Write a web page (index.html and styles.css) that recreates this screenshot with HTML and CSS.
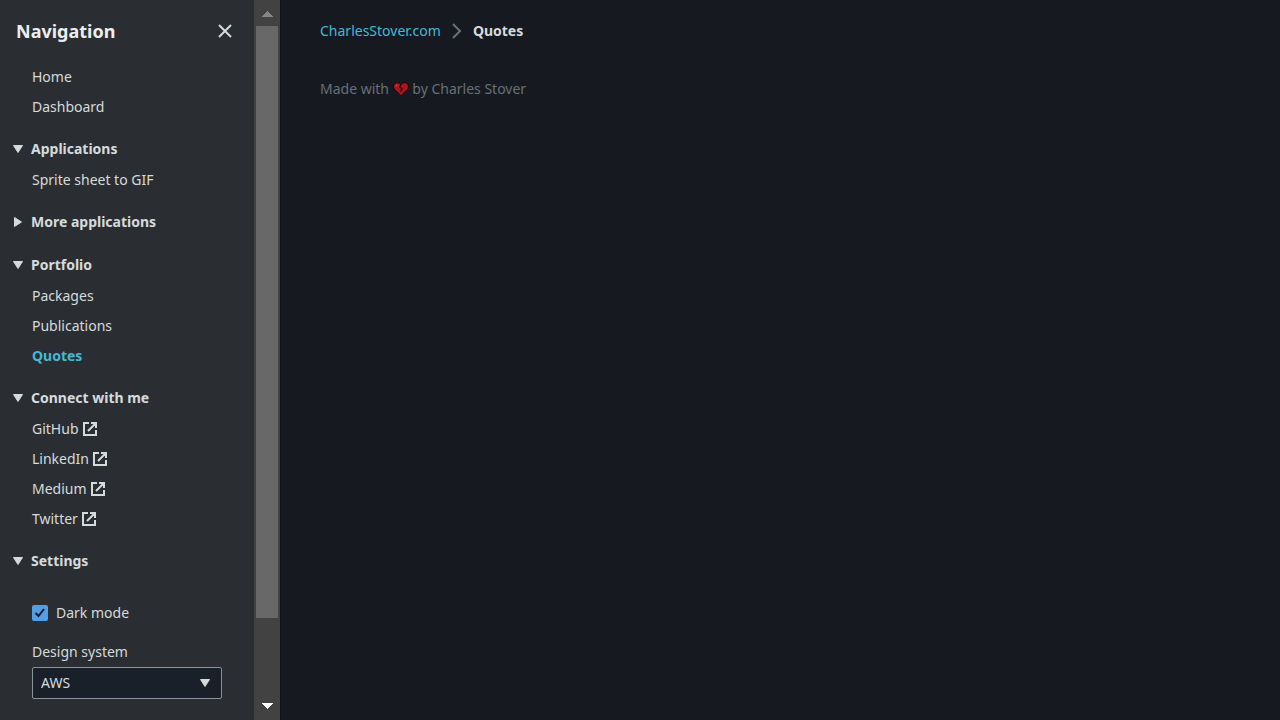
FILE: index.html
```html
<!DOCTYPE html>
<html lang="en">
<head>
<meta charset="utf-8">
<meta name="viewport" content="width=device-width, initial-scale=1">
<title>Quotes - CharlesStover.com</title>
<link rel="stylesheet" href="styles.css">
</head>
<body>
<svg class="defs" aria-hidden="true">
  <symbol id="external" viewBox="0 0 16 16"><path d="M7 2H2v12h12V9M9 2h5v5M6 10l7.500-7.500" fill="none" stroke="currentColor" stroke-width="2"/></symbol>
  <symbol id="caret" viewBox="0 0 12 10"><path d="M1.500 1.500h9L6 8.500z" fill="currentColor" stroke="currentColor" stroke-linejoin="round"/></symbol>
</svg>
<div class="app">
  <aside class="drawer">
    <nav class="navigation" aria-label="Navigation">
      <header class="nav-header">
        <h2 class="nav-title">Navigation</h2>
        <button class="close" type="button" aria-label="Close navigation">
          <svg class="icon" viewBox="0 0 16 16"><path d="M2 2l12 12M14 2L2 14" fill="none" stroke="currentColor" stroke-width="2"/></svg>
        </button>
      </header>
      <ul class="links">
        <li><a class="link" href="#home">Home</a></li>
        <li><a class="link" href="#dashboard">Dashboard</a></li>
      </ul>
      <section class="group">
        <button class="group-title" type="button" aria-expanded="true"><svg class="caret"><use href="#caret"/></svg>Applications</button>
        <ul class="links">
          <li><a class="link" href="#sprite">Sprite sheet to GIF</a></li>
        </ul>
      </section>
      <section class="group">
        <button class="group-title" type="button" aria-expanded="false"><svg class="caret caret-closed"><use href="#caret"/></svg>More applications</button>
      </section>
      <section class="group">
        <button class="group-title" type="button" aria-expanded="true"><svg class="caret"><use href="#caret"/></svg>Portfolio</button>
        <ul class="links">
          <li><a class="link" href="#packages">Packages</a></li>
          <li><a class="link" href="#publications">Publications</a></li>
          <li><a class="link link-active" href="#quotes" aria-current="page">Quotes</a></li>
        </ul>
      </section>
      <section class="group">
        <button class="group-title" type="button" aria-expanded="true"><svg class="caret"><use href="#caret"/></svg>Connect with me</button>
        <ul class="links">
          <li><a class="link" href="#github">GitHub<svg class="icon"><use href="#external"/></svg></a></li>
          <li><a class="link" href="#linkedin">LinkedIn<svg class="icon"><use href="#external"/></svg></a></li>
          <li><a class="link" href="#medium">Medium<svg class="icon"><use href="#external"/></svg></a></li>
          <li><a class="link" href="#twitter">Twitter<svg class="icon"><use href="#external"/></svg></a></li>
        </ul>
      </section>
      <section class="group">
        <button class="group-title" type="button" aria-expanded="true"><svg class="caret"><use href="#caret"/></svg>Settings</button>
        <div class="settings">
          <label class="check" for="dark"><input class="check-box" id="dark" type="checkbox" checked>Dark mode</label>
          <div class="field">
            <label for="design">Design system</label>
            <div class="select-wrap">
              <select class="select" id="design"><option>AWS</option></select>
              <svg class="caret select-caret"><use href="#caret"/></svg>
            </div>
          </div>
        </div>
      </section>
    </nav>
    <div class="scrollbar" aria-hidden="true">
      <svg class="arrow arrow-up" viewBox="0 0 26 26"><path d="M7 17h12l-6-6z" fill="currentColor"/></svg>
      <div class="track"><div class="thumb"></div></div>
      <svg class="arrow" viewBox="0 0 26 26"><path d="M7 9h12l-6 6z" fill="currentColor"/></svg>
    </div>
  </aside>
  <div class="content">
    <nav aria-label="Breadcrumbs">
      <ol class="breadcrumbs">
        <li><a class="crumb" href="#home">CharlesStover.com</a></li>
        <li class="separator" aria-hidden="true"><svg class="icon" viewBox="0 0 16 16"><path d="M4 1l7 7-7 7" fill="none" stroke="currentColor" stroke-width="2"/></svg></li>
        <li class="current" aria-current="page">Quotes</li>
      </ol>
    </nav>
    <footer class="footer">Made with
      <svg class="heart" role="img" aria-label="love" viewBox="0 0 16 16">
        <path d="M8 14.800L1.300 8.200C-.6 5.400 1 1.700 4.300 1.700 6 1.700 7.300 2.500 8 3.800 8.700 2.500 10 1.700 11.700 1.700c3.300 0 4.900 3.700 3 6.500z" fill="#ac141e" stroke="#1c0508" stroke-width="1"/>
        <path d="M8 3.800L6.300 6.300l2.700 1.200L7.500 10.500" fill="none" stroke="#1c0508" stroke-width="1.200"/>
        <path d="M3 5.500l1.500-1.800" stroke="#c4484c" stroke-width="1.200"/>
      </svg>
      by Charles Stover</footer>
  </div>
</div>
</body>
</html>
```

FILE: styles.css
```css
* { box-sizing: border-box; }
body {
  margin: 0;
  background: #16191f;
  color: #d5dbdb;
  font-family: "Noto Sans", "Open Sans", sans-serif;
  font-size: 14px;
  line-height: 22px;
}
ul, ol { list-style: none; margin: 0; padding: 0; }
a { text-decoration: none; }
button, select { font: inherit; color: inherit; }
button { border: 0; padding: 0; background: none; cursor: pointer; }
.defs { display: none; }
.icon { display: block; flex: none; width: 16px; height: 16px; }

.app { display: flex; height: 100vh; }
.drawer {
  display: flex;
  flex: none;
  width: 280px;
  background: #2a2e33;
  box-shadow: 1px 0 1px #0f1216;
}
.navigation { flex: 1; overflow: hidden; }
.nav-header {
  display: flex;
  align-items: center;
  justify-content: space-between;
  height: 62px;
  padding: 0 21px 0 16px;
}
.nav-title { margin: 0; font-size: 18px; font-weight: 700; color: #eaeded; }
.link {
  display: flex;
  align-items: center;
  gap: 3px;
  padding: 4px 32px;
  color: #d5dbdb;
}
.link-active { color: #44b9d6; font-weight: 700; }
.group { margin-top: 12px; }
.group-title {
  display: flex;
  align-items: center;
  gap: 7px;
  width: 100%;
  padding: 4px 12px 5px;
  font-weight: 700;
}
.caret { flex: none; width: 12px; height: 10px; }
.caret-closed { transform: rotate(-90deg); }
.settings { padding: 25px 32px 20px; }
.check { display: flex; align-items: center; gap: 8px; }
.check-box {
  appearance: none;
  width: 16px;
  height: 16px;
  margin: 0;
  border-radius: 2px;
  background: #539fe5 url("data:image/svg+xml,%3Csvg xmlns='http://www.w3.org/2000/svg' viewBox='0 0 16 16'%3E%3Cpath d='M3.500 8l3 3 5.500-7' fill='none' stroke='%2316191f' stroke-width='2'/%3E%3C/svg%3E");
}
.field { margin-top: 17px; }
.field label { display: block; }
.select-wrap { display: grid; align-items: center; margin-top: 4px; }
.select, .select-caret { grid-area: 1 / 1; }
.select {
  appearance: none;
  width: 100%;
  height: 32px;
  padding: 0 8px;
  border: 1px solid #879596;
  border-radius: 2px;
  background: #1a2029;
}
.select-caret { justify-self: end; margin-right: 11px; pointer-events: none; }

.scrollbar {
  display: flex;
  flex: none;
  flex-direction: column;
  width: 26px;
  background: #424242;
}
.arrow { flex: none; height: 26px; color: #fff; shape-rendering: crispEdges; }
.arrow-up { color: #868686; }
.track { flex: 1; padding: 0 2px; }
.thumb { height: 88.6%; background: #686868; }

.content { flex: 1; padding: 20px 40px; }
.breadcrumbs { display: flex; align-items: center; }
.crumb { color: #44b9d6; }
.separator { padding: 0 8px; color: #687078; }
.current { color: #d5dbdb; font-weight: 700; }
.footer { margin-top: 36px; color: #687078; }
.heart { width: 16px; height: 16px; vertical-align: -3px; }
```
